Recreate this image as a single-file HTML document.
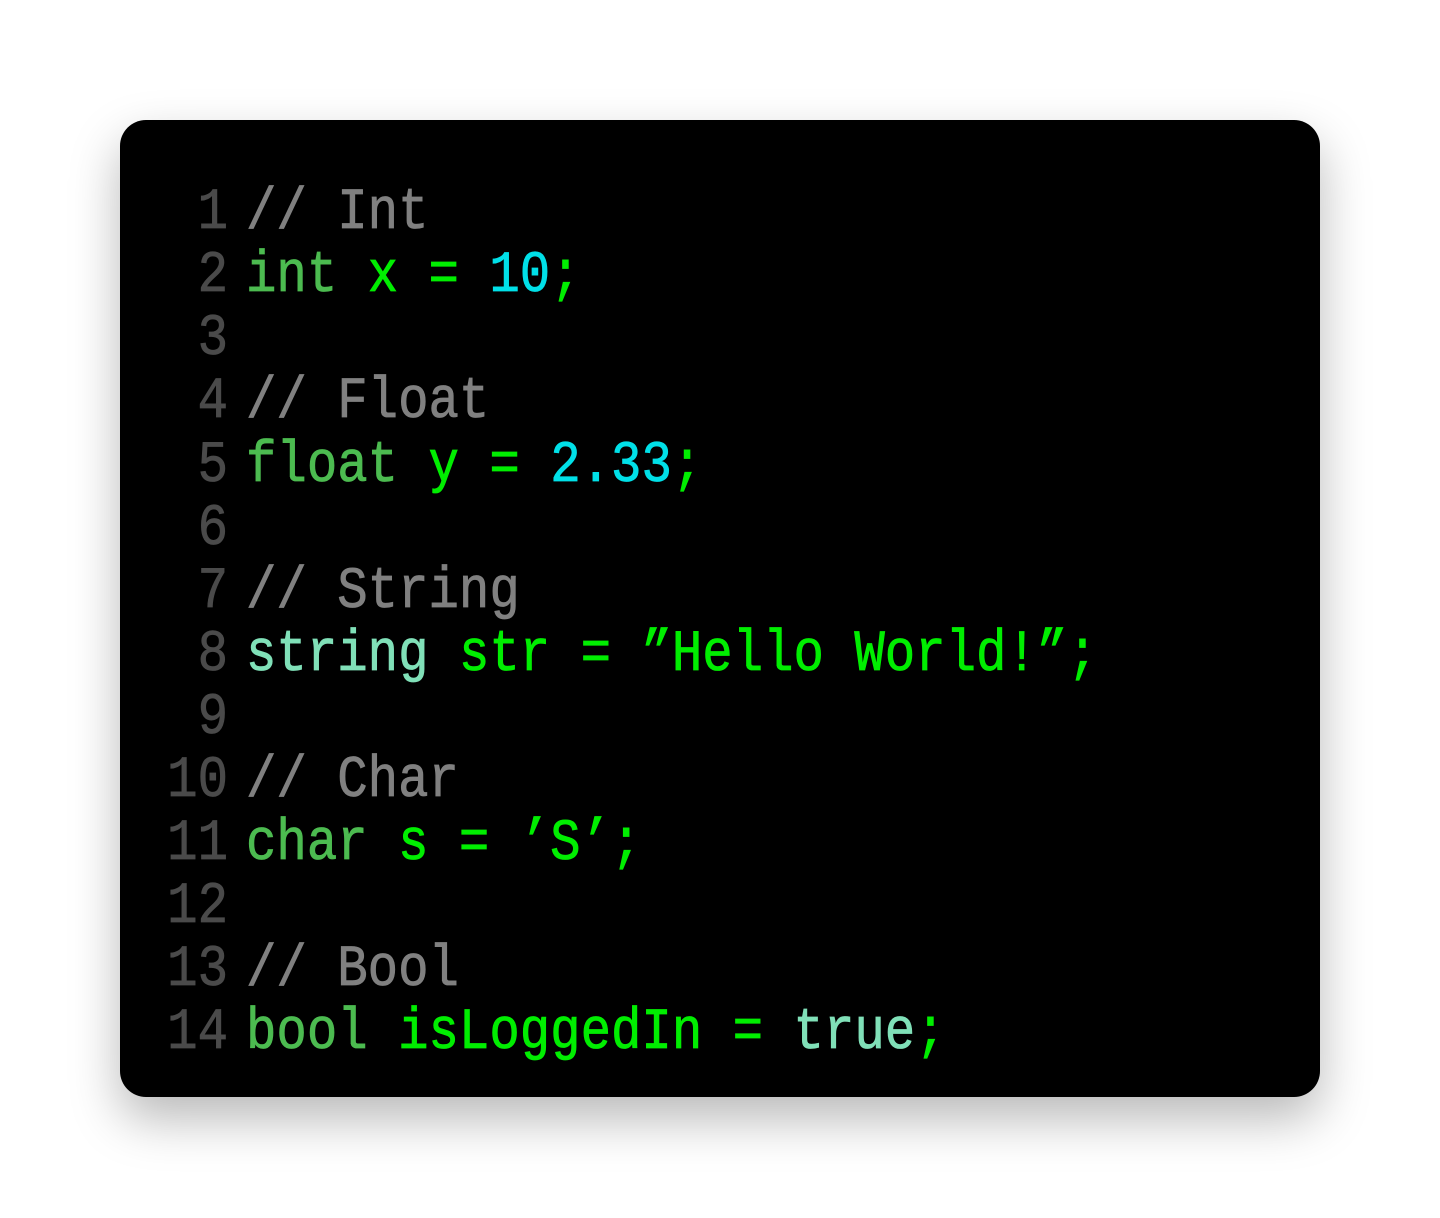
<!DOCTYPE html>
<html><head><meta charset="utf-8"><style>
html,body{margin:0;padding:0;background:#fff;width:1440px;height:1218px;overflow:hidden}
.card{position:absolute;left:120px;top:120px;width:1200px;height:977px;background:#000;border-radius:26px;box-shadow:0 22px 50px rgba(0,0,0,0.28)}
.ln{position:absolute;left:0;width:1440px;height:63px;line-height:63px;font-family:"Liberation Mono",monospace;font-size:50.7px;white-space:pre;transform:scaleY(1.15);transform-origin:0 45px;-webkit-text-stroke:0.7px currentColor}
.n{position:absolute;right:1212px;color:#4a4a4a}
.c{position:absolute;left:246px}
.cm{color:#808080}.k{color:#4cbb50}.i{color:#00ee00}.num{color:#00e0e8}.t{color:#80e0b8}
</style></head><body>
<div class="card"></div>
<div class="ln" style="top:184px"><span class="n">1</span><span class="c cm">// Int</span></div>
<div class="ln" style="top:247px"><span class="n">2</span><span class="c"><span class="k">int</span> <span class="i">x = </span><span class="num">10</span><span class="i">;</span></span></div>
<div class="ln" style="top:310px"><span class="n">3</span></div>
<div class="ln" style="top:373px"><span class="n">4</span><span class="c cm">// Float</span></div>
<div class="ln" style="top:437px"><span class="n">5</span><span class="c"><span class="k">float</span> <span class="i">y = </span><span class="num">2.33</span><span class="i">;</span></span></div>
<div class="ln" style="top:500px"><span class="n">6</span></div>
<div class="ln" style="top:563px"><span class="n">7</span><span class="c cm">// String</span></div>
<div class="ln" style="top:626px"><span class="n">8</span><span class="c"><span class="t">string</span> <span class="i">str = ”Hello World!”;</span></span></div>
<div class="ln" style="top:689px"><span class="n">9</span></div>
<div class="ln" style="top:752px"><span class="n">10</span><span class="c cm">// Char</span></div>
<div class="ln" style="top:815px"><span class="n">11</span><span class="c"><span class="k">char</span> <span class="i">s = ’S’;</span></span></div>
<div class="ln" style="top:878px"><span class="n">12</span></div>
<div class="ln" style="top:941px"><span class="n">13</span><span class="c cm">// Bool</span></div>
<div class="ln" style="top:1004px"><span class="n">14</span><span class="c"><span class="k">bool</span> <span class="i">isLoggedIn = </span><span class="t">true</span><span class="i">;</span></span></div>
</body></html>
